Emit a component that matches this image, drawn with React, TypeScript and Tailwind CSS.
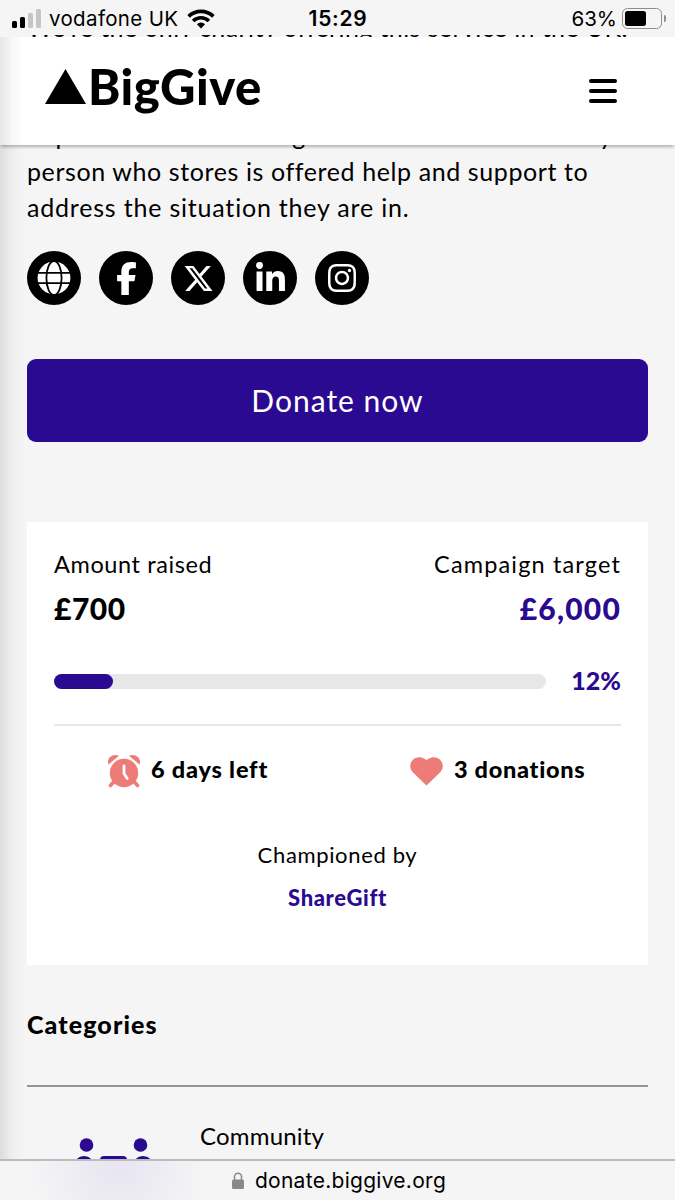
import type { ReactNode } from 'react';
import { FaFacebookF, FaInstagram, FaLinkedinIn, FaXTwitter } from 'react-icons/fa6';

function StatusBar() {
  return (
    <div className="flex h-[35px] shrink-0 items-center justify-between pr-[9px] pl-3 font-[Inter,sans-serif] text-[20.5px] text-black">
      <div className="flex w-[240px] items-center pt-[2px]">
        <div className="flex h-[19px] items-end gap-[3px]">
          <span className="h-[7px] w-[5px] rounded-[1.5px] bg-black" />
          <span className="h-[11px] w-[5px] rounded-[1.5px] bg-black" />
          <span className="h-[15px] w-[5px] rounded-[1.5px] bg-[#c6c6c6]" />
          <span className="h-[19px] w-[5px] rounded-[1.5px] bg-[#c6c6c6]" />
        </div>
        <span className="ml-2 pt-[2px] tracking-[0.35px] whitespace-nowrap">vodafone UK</span>
        <svg className="ml-[9px] shrink-0" width="28" height="20" viewBox="0 0 28 20" fill="none" stroke="black" strokeWidth="3.6">
          <path d="M1.6 7.4a17.8 17.8 0 0 1 24.8 0" />
          <path d="M6.1 12a11.4 11.4 0 0 1 15.8 0" />
          <path d="M14 19.4 9.9 15.2a5.9 5.9 0 0 1 8.2 0z" fill="black" stroke="none" />
        </svg>
      </div>
      <span className="-ml-[2px] pt-[3px] text-[21px] font-semibold tracking-[0.7px]">15:29</span>
      <div className="flex w-[240px] items-center justify-end pt-[2px]">
        <span className="pt-[2px]">63%</span>
        <div className="ml-[5px] h-[21px] w-10 rounded-[5.5px] border-[1.5px] border-[#8e8e8e] p-[2px]">
          <div className="h-full w-[21px] rounded-[2.5px] bg-black" />
        </div>
        <span className="ml-[2px] h-[7px] w-[2px] rounded-r-full bg-[#8e8e8e]" />
      </div>
    </div>
  );
}

function Header() {
  return (
    <header className="relative z-10 flex h-[108px] shrink-0 items-start justify-between bg-white pr-[58px] pl-[45px] shadow-[0_3px_3px_-1px_rgba(0,0,0,0.28)]">
      <div className="flex items-start">
        <svg className="mt-[32px]" width="41" height="35" viewBox="0 0 41 35">
          <path d="M20.5 0 41 35H0z" />
        </svg>
        <span className="ml-[2px] pt-[20px] text-[49px] leading-[58px] font-black tracking-[0.5px]">BigGive</span>
      </div>
      <div className="mt-[42px] flex flex-col gap-[6px]">
        <span className="h-[4px] w-7 rounded-full bg-black" />
        <span className="h-[4px] w-7 rounded-full bg-black" />
        <span className="h-[4px] w-7 rounded-full bg-black" />
      </div>
    </header>
  );
}

function SocialLink({ children }: { children: ReactNode }) {
  return (
    <a className="flex size-[54px] items-center justify-center rounded-full bg-black text-white">
      {children}
    </a>
  );
}

function GlobeIcon() {
  return (
    <svg width="34" height="34" viewBox="0 0 34 34" fill="none" stroke="black" strokeWidth="1.8">
      <circle cx="17" cy="17" r="16.4" fill="white" stroke="none" />
      <ellipse cx="17" cy="17" rx="7.6" ry="17" />
      <path d="M0 11.8h34M0 22.2h34" />
    </svg>
  );
}

function AlarmIcon() {
  return (
    <svg width="34" height="34" viewBox="0 0 34 34" fill="#ed7b78">
      <path d="M1.5 10.5C-.8 4.5 5.5-1.2 12 1.8zM32.5 10.5C34.8 4.5 28.5-1.2 22 1.8z" />
      <circle cx="17" cy="19" r="14.2" />
      <path d="m7.5 27-4 4.5M26.5 27l4 4.5" stroke="#ed7b78" strokeWidth="3.6" strokeLinecap="round" />
      <path d="M17 12v7.5l3.2 5" fill="none" stroke="white" strokeWidth="2.8" strokeLinecap="round" strokeLinejoin="round" />
    </svg>
  );
}

function HeartIcon() {
  return (
    <svg width="33" height="29" viewBox="0 0 33 29" fill="#ed7b78">
      <path d="M16.5 28.5 2.8 15.2C-.5 12-.6 6.5 2.5 3.2 5.8-.3 11.2-.4 14.7 2l1.8 1.1L18.3 2c3.500-2.400 8.900-2.300 12.200 1.200 3.100 3.300 3 8.800-.3 12z" />
    </svg>
  );
}

function CampaignStats() {
  return (
    <section className="mt-[80px] h-[443px] bg-white px-[27px] pt-[24px]">
      <div className="flex justify-between text-[23.5px] leading-9">
        <span className="tracking-[0.6px]">Amount raised</span>
        <span className="tracking-[1.15px]">Campaign target</span>
      </div>
      <div className="mt-[6px] flex justify-between text-[30px] leading-10 font-black">
        <span className="tracking-[0.5px]">£700</span>
        <span className="tracking-[1.2px] text-[#2a0a91]">£6,000</span>
      </div>
      <div className="mt-[35px] flex h-[36px] items-center justify-between">
        <div className="h-[15px] w-[492px] rounded-full bg-[#e7e7e7]">
          <div className="h-full rounded-full bg-[#2a0a91]" style={{ width: '12%' }} />
        </div>
        <span className="text-[25px] font-black text-[#2a0a91]">12%</span>
      </div>
      <div className="mt-[25px] border-t-2 border-[#e7e7e7]" />
      <div className="mt-[27px] flex h-9 items-center text-[23.5px] font-black">
        <div className="ml-[53px] flex w-[303px] items-center gap-[10px]">
          <AlarmIcon />
          <span className="-mt-[2px] tracking-[0.8px]">6 days left</span>
        </div>
        <div className="flex items-center gap-[11px]">
          <HeartIcon />
          <span className="-mt-[2px] tracking-[0.7px]">3 donations</span>
        </div>
      </div>
      <div className="mt-[48px] flex flex-col items-center">
        <span className="text-[22px] leading-9 tracking-[0.65px]">Championed by</span>
        <a className="mt-[7px] text-[22px] leading-9 font-black tracking-[0.6px] text-[#2a0a91]">ShareGift</a>
      </div>
    </section>
  );
}

function CommunityIcon() {
  return (
    <svg width="90" height="60" viewBox="0 0 90 60" fill="#2a0a91">
      <circle cx="18.5" cy="7" r="6.8" />
      <circle cx="72.5" cy="7" r="6.8" />
      <circle cx="16" cy="28.5" r="10.5" />
      <circle cx="75" cy="28.5" r="10.5" />
      <rect x="32" y="18" width="27" height="30" rx="4" />
    </svg>
  );
}

function AddressBar() {
  return (
    <div className="relative z-10 flex h-[41px] shrink-0 items-center justify-center border-t-2 border-[#bcbcbc] bg-[#f5f5f6] bg-radial-[90px_80px_at_118px_10px] from-[#e7e5f0] to-[#f5f5f6] font-[Inter,sans-serif] text-[21px]">
      <svg className="mr-[11px] ml-[3px] shrink-0" width="12" height="17" viewBox="0 0 12 17">
        <path d="M2.5 8V4.8a3.5 3.5 0 0 1 7 0V8" fill="none" stroke="#88878c" strokeWidth="1.5" />
        <rect y="7.5" width="12" height="9.5" rx="1.5" fill="#88878c" />
      </svg>
      <span className="tracking-[0.28px]">donate.biggive.org</span>
    </div>
  );
}

export default function App() {
  return (
    <div className="relative flex h-[1200px] w-[675px] flex-col overflow-hidden bg-[#f5f5f5] font-[Lato,sans-serif] text-black">
      <StatusBar />
      <div className="h-[2px] shrink-0 overflow-hidden px-[27px]">
        <p className="-mt-[26px] text-[25px] leading-9 tracking-[0.4px] whitespace-nowrap">
          We&rsquo;re the only charity offering this service in the UK.
        </p>
      </div>
      <Header />
      <main className="min-h-0 flex-1 overflow-hidden px-[27px]">
        <p className="-mt-[28px] text-[25px] leading-9 whitespace-nowrap">
          <span className="tracking-[1px]">improve their wellbeing and make sure that every</span>
          <br />
          <span className="tracking-[0.6px]">person who stores is offered help and support to</span>
          <br />
          <span className="tracking-[0.8px]">address the situation they are in.</span>
        </p>
        <div className="mt-[26px] flex gap-[18px]">
          <SocialLink>
            <GlobeIcon />
          </SocialLink>
          <SocialLink>
            <FaFacebookF size={33} />
          </SocialLink>
          <SocialLink>
            <FaXTwitter size={31} />
          </SocialLink>
          <SocialLink>
            <FaLinkedinIn size={33} />
          </SocialLink>
          <SocialLink>
            <FaInstagram size={32} />
          </SocialLink>
        </div>
        <button className="mt-[54px] flex h-[83px] w-full items-center justify-center rounded-[9px] bg-[#2a0a91] pb-px text-[30px] tracking-[1px] text-white">
          Donate now
        </button>
        <CampaignStats />
        <h2 className="mt-[41px] text-[25px] leading-9 font-black tracking-[1.1px]">Categories</h2>
        <div className="mt-[43px] border-t-2 border-[#929591]" />
        <div className="mt-[31px] flex">
          <div className="mt-[20px] ml-[41px] w-[132px]">
            <CommunityIcon />
          </div>
          <span className="text-[24px] leading-9 tracking-[0.2px]">Community</span>
        </div>
      </main>
      <AddressBar />
      <div className="absolute top-[37px] bottom-[41px] left-0 z-20 w-[24px] bg-linear-to-r from-black/10 via-black/3 to-transparent" />
    </div>
  );
}
